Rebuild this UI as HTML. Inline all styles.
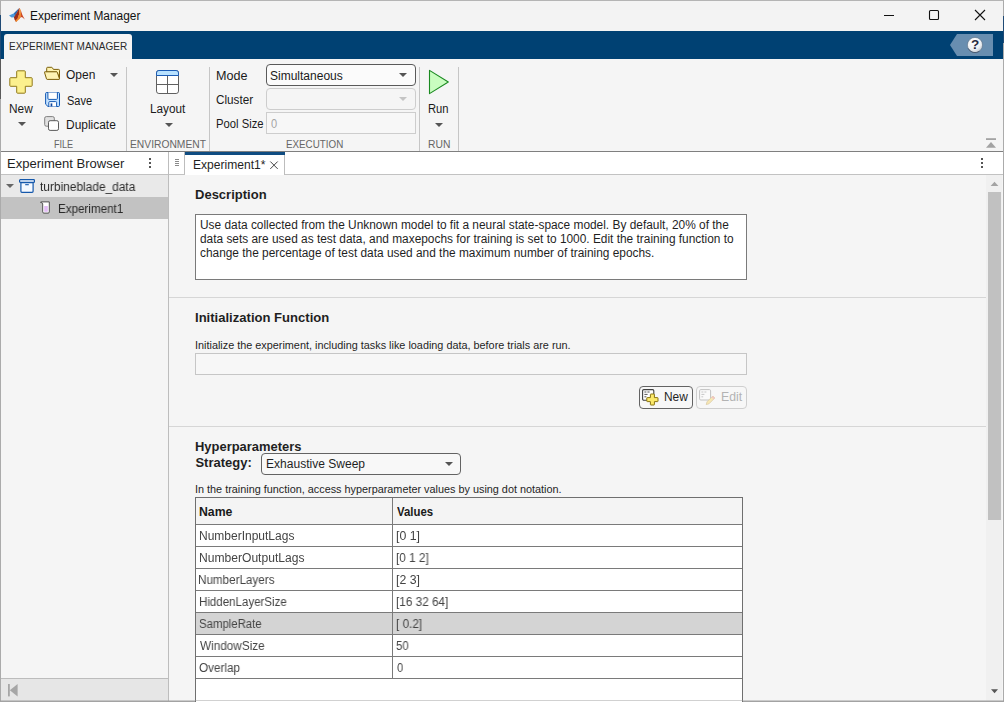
<!DOCTYPE html>
<html lang="en">
<head>
<meta charset="utf-8">
<title>Experiment Manager</title>
<style>
*{box-sizing:border-box;margin:0;padding:0}
html,body{width:1004px;height:702px;overflow:hidden;background:#f5f5f5}
body{position:relative;font-family:"Liberation Sans",sans-serif;font-size:12px;color:#1a1a1a}
.abs{position:absolute}
.t{position:absolute;white-space:nowrap;line-height:1;transform-origin:0 0}
/* window chrome */
#win{position:absolute;left:0;top:0;width:1004px;height:702px;background:#f5f5f5;border:1px solid #ababab;border-top-color:#b4b4b4}
#edgeL{position:absolute;left:0;top:59px;width:1px;height:40px;background:#5a5a5a}
#edgeL2{position:absolute;left:0;top:15px;width:1px;height:44px;background:#1f4a75}
#edgeR{position:absolute;left:1003px;top:16px;width:1px;height:27px;background:#1f4a75}
#edgeB{position:absolute;left:0;top:701px;width:1004px;height:1px;background:#a3a3a3}
#title{position:absolute;left:1px;top:1px;width:1002px;height:30px;background:#f3f3f3}
#band{position:absolute;left:1px;top:31px;width:1002px;height:28px;background:#004173}
#tab{position:absolute;left:4px;top:34px;width:128px;height:25px;background:#f4f4f4;border-radius:3px 3px 0 0}
#strip{position:absolute;left:1px;top:59px;width:1002px;height:92px;background:#f5f5f5}
#stripline{position:absolute;left:1px;top:151px;width:1002px;height:1px;background:#7f7f7f}
.vsep{position:absolute;top:67px;width:1px;height:84px;background:#c6c6c6}
.seg{font-size:12px;color:#1a1a1a}
.grp{font-size:10.5px;color:#666}
.c{color:#444;will-change:transform}
#ttb,#texp1{will-change:transform}
.dd{position:absolute;left:266px;width:150px;height:22px;border:1px solid #5a5a5a;border-radius:4px;background:#fbfbfb}
.arrow{position:absolute;width:0;height:0;border-left:4px solid transparent;border-right:4px solid transparent;border-top:4px solid #555}
/* panels */
#lefthead{position:absolute;left:1px;top:152px;width:167px;height:22px;background:#fff}
#dochead{position:absolute;left:169px;top:152px;width:834px;height:22px;background:#fff}
#headline{position:absolute;left:1px;top:174px;width:1002px;height:1px;background:#c2c2c2}
#leftv{position:absolute;left:168px;top:152px;width:1px;height:549px;background:#bdbdbd}
#row1{position:absolute;left:1px;top:175px;width:167px;height:22px;background:#e9e9e9}
#row2{position:absolute;left:1px;top:197px;width:167px;height:22px;background:#c2c2c2}
#leftfootline{position:absolute;left:1px;top:678px;width:167px;height:1px;background:#bcbcbc}
#leftfoot{position:absolute;left:1px;top:679px;width:167px;height:22px;background:#e6e6e6}
.hsep{position:absolute;left:169px;width:817px;height:1px;background:#d6d6d6}
.h{font-weight:bold;font-size:13px;color:#1f1f1f}
.a12{font-size:12px;color:#1f1f1f}
.a11{font-size:11px;color:#1f1f1f}
#desc{position:absolute;left:195px;top:214px;width:552px;height:66px;background:#fff;border:1px solid #7a7a7a;padding:4px 0 0 5px;font-size:12px;line-height:14px;color:#1f1f1f;white-space:nowrap}
#init{position:absolute;left:195px;top:353px;width:552px;height:22px;background:#f7f7f7;border:1px solid #c6c6c6}
.btn{position:absolute;top:386px;height:23px;border-radius:4px;background:#f7f7f7}
#tbl{position:absolute;left:195px;top:497px;width:548px;height:210px;background:#fff;border:1px solid #6f6f6f}
.tr{position:absolute;left:0;width:546px;height:1px;background:#7a7a7a}
#sbtrack{position:absolute;left:986px;top:175px;width:16px;height:526px;background:#f0f0f0}
#sbthumb{position:absolute;left:988px;top:192px;width:13px;height:328px;background:#c1c1c1}
</style>
</head>
<body>
<div id="win"></div>
<div id="edgeL"></div><div id="edgeL2"></div><div id="edgeR"></div><div id="edgeB"></div>
<div id="title"></div>
<div id="band"></div>
<div id="tab"></div>
<div id="strip"></div>
<div id="stripline"></div>

<!-- title bar -->
<svg class="abs" style="left:9px;top:8px" width="16" height="14" viewBox="0 0 16 14">
<path d="M0 7.4 L5 5.2 L8.6 1.8 L10 0.4 L7.8 4.8 L6.2 7.6 L5.4 9.2 L2.6 9.6 Z" fill="#4a98da"/>
<path d="M5 5.2 L8.6 1.8 L10.2 0.2 L7.8 4.8 L6.2 7.6 Z" fill="#2f68b0"/>
<path d="M4.9 9.3 L7.8 4.8 L10.3 0.1 L10.6 0 L10.2 6 L8.6 11.4 L7.1 14 L5.6 11.8 Z" fill="#9a2b1a"/>
<path d="M10.6 0 L11.7 2 L12.1 7.6 L10.8 10.8 L7.1 14 L6.2 12.6 L8.4 10.6 L10.1 6 Z" fill="#f0872c"/>
<path d="M11.7 2 L13.4 7 L15.8 11.4 L13.6 9.6 L12 8.9 L10.6 10.6 L12.1 7.6 Z" fill="#cd4722"/>
</svg>
<div class="t seg" id="ttl" style="left:29.9px;top:10px;font-size:12px;color:#111;transform:scaleX(0.991)">Experiment Manager</div>
<svg class="abs" style="left:880px;top:5px" width="110" height="20" viewBox="0 0 110 20">
<path d="M4 10.5 H14" stroke="#111" stroke-width="1" fill="none"/>
<rect x="49.5" y="5.5" width="9" height="9" rx="1" fill="none" stroke="#111" stroke-width="1.1"/>
<path d="M95 5 L105 15 M105 5 L95 15" stroke="#111" stroke-width="1.1" fill="none"/>
</svg>

<!-- band -->
<div class="t" id="tabtxt" style="left:9.4px;top:41px;font-size:10.5px;color:#2a2a2a;transform:scaleX(0.952)">EXPERIMENT MANAGER</div>
<svg class="abs" style="left:950px;top:34px" width="44" height="22" viewBox="0 0 44 22">
<defs><radialGradient id="hg" cx="0.4" cy="0.3" r="0.8"><stop offset="0" stop-color="#ffffff"/><stop offset="0.6" stop-color="#eef1f4"/><stop offset="1" stop-color="#b5bcc4"/></radialGradient></defs>
<path d="M0 11 L7 0 H43 V22 H7 Z" fill="#688eb0"/>
<circle cx="25" cy="11" r="7.6" fill="url(#hg)" stroke="#5b6f84" stroke-width="0.6"/>
<path d="M18.2 14.5 A7.6 7.6 0 0 0 29.5 17.2" fill="none" stroke="#3b4a63" stroke-width="1" opacity=".7"/><text x="25" y="15.2" text-anchor="middle" font-family="Liberation Sans, sans-serif" font-weight="bold" font-size="13.5" fill="#262b40">?</text>
</svg>

<!-- toolstrip: FILE -->
<svg class="abs" style="left:9px;top:70px" width="24" height="24" viewBox="0 0 24 24">
<path d="M8.5 0.8 H15.5 Q16.3 0.8 16.3 1.6 V7.7 H22.4 Q23.2 7.7 23.2 8.5 V15.5 Q23.2 16.3 22.4 16.3 H16.3 V22.4 Q16.3 23.2 15.5 23.2 H8.5 Q7.7 23.2 7.7 22.4 V16.3 H1.6 Q0.8 16.3 0.8 15.5 V8.5 Q0.8 7.7 1.6 7.7 H7.7 V1.6 Q7.7 0.8 8.5 0.8 Z" fill="#fcf08e" stroke="#91791a" stroke-width="1"/>
</svg>
<div class="t seg" id="tnew" style="left:9.2px;top:103px;transform:scaleX(0.988)">New</div>
<div class="arrow" style="left:18px;top:122px"></div>

<svg class="abs" style="left:44px;top:66px" width="17" height="15" viewBox="0 0 17 15">
<path d="M2.7 6 V2.2 Q2.7 1.3 3.6 1.3 H7.6 Q8.1 1.3 8.4 1.8 L9.4 3.4 H14.6 Q15.5 3.4 15.5 4.3 V12.6 L13 6 Z" fill="#fdf2b0" stroke="#7b5e08" stroke-width="1" stroke-linejoin="round"/>
<path d="M0.7 5.8 H12.6 Q13.1 5.8 13.3 6.3 L15.5 12.8 Q15.6 13.4 15 13.4 H3.2 Q2.7 13.4 2.5 12.9 L0.5 6.4 Q0.4 5.8 0.7 5.8 Z" fill="#fef3b4" stroke="#7b5e08" stroke-width="1" stroke-linejoin="round"/>
</svg>
<div class="t seg" id="topen" style="left:66.2px;top:69px;transform:scaleX(0.999)">Open</div>
<div class="arrow" style="left:110px;top:73px"></div>

<svg class="abs" style="left:45px;top:92px" width="16" height="16" viewBox="0 0 16 16">
<path d="M1.7 0.5 H13.4 Q14.5 0.5 14.5 1.6 V13.4 Q14.5 14.5 13.4 14.5 H3 L0.6 12.2 V1.6 Q0.6 0.5 1.7 0.5 Z" fill="#c2e1ff" stroke="#1459b3" stroke-width="1"/>
<path d="M2.9 0.5 V6.4 Q2.9 7.4 3.9 7.4 H11.4 Q12.4 7.4 12.4 6.4 V0.5" fill="#ffffff" stroke="#1459b3" stroke-width="1"/>
<path d="M3.8 14.5 V10.5 Q3.8 9.6 4.7 9.6 H10.7 Q11.6 9.6 11.6 10.5 V14.5" fill="#ffffff" stroke="#1459b3" stroke-width="1"/>
<rect x="5.6" y="11.4" width="1.7" height="3" fill="#0d47a1"/>
</svg>
<div class="t seg" id="tsave" style="left:66.6px;top:95px;transform:scaleX(0.918)">Save</div>

<svg class="abs" style="left:44px;top:116px" width="16" height="16" viewBox="0 0 16 16">
<rect x="0.7" y="0.6" width="9.6" height="9.6" rx="1.6" fill="#e1e1e1" stroke="#808080" stroke-width="1"/>
<rect x="4.5" y="4.7" width="10" height="9.7" rx="1.6" fill="#ffffff" stroke="#5a5a5a" stroke-width="1"/>
</svg>
<div class="t seg" id="tdup" style="left:66.4px;top:119px;transform:scaleX(0.996)">Duplicate</div>
<div class="t grp" id="gfile" style="left:54.3px;top:139px;transform:scaleX(0.865)">FILE</div>
<div class="vsep" style="left:126px"></div>

<!-- ENVIRONMENT -->
<svg class="abs" style="left:156px;top:70px" width="24" height="24" viewBox="0 0 24 24">
<rect x="0.5" y="0.5" width="22" height="23" rx="2.4" fill="#ffffff" stroke="#606060" stroke-width="1"/>
<path d="M0.5 14.5 H22.5 M11.5 5.8 V23.5" stroke="#606060" stroke-width="1"/>
<path d="M0.5 5.5 V2.9 Q0.5 0.5 2.9 0.5 H20.1 Q22.5 0.5 22.5 2.9 V5.5 Z" fill="#b7e1ff" stroke="#1b5cb5" stroke-width="1"/>
</svg>
<div class="t seg" id="tlayout" style="left:149.9px;top:103px;transform:scaleX(0.980)">Layout</div>
<div class="arrow" style="left:165px;top:123px"></div>
<div class="t grp" id="genv" style="left:129.9px;top:139px;transform:scaleX(0.979)">ENVIRONMENT</div>
<div class="vsep" style="left:209px"></div>

<!-- EXECUTION -->
<div class="t seg" id="tmode" style="left:215.8px;top:70px;transform:scaleX(1.048)">Mode</div>
<div class="t seg" id="tcluster" style="left:216.0px;top:94px;transform:scaleX(0.976)">Cluster</div>
<div class="t seg" id="tpool" style="left:215.8px;top:118px;transform:scaleX(0.937)">Pool Size</div>
<div class="dd" style="top:64px"></div>
<div class="t seg" id="tsim" style="left:269.8px;top:70px;transform:scaleX(1.001)">Simultaneous</div>
<div class="arrow" style="left:399px;top:73px"></div>
<div class="dd" style="top:88px;border-color:#cdcdcd;background:#f5f5f5"></div>
<div class="arrow" style="left:399px;top:97px;border-top-color:#c4c4c4"></div>
<div class="dd" style="top:112px;border-color:#cdcdcd;border-radius:0;background:#f7f7f7"></div>
<div class="t seg" id="tzero" style="left:270.8px;top:118px;color:#a5a5a5;transform:scaleX(0.92)">0</div>
<div class="t grp" id="gexec" style="left:285.7px;top:139px;transform:scaleX(0.934)">EXECUTION</div>
<div class="vsep" style="left:419px"></div>

<!-- RUN -->
<svg class="abs" style="left:428px;top:69px" width="22" height="26" viewBox="0 0 22 26">
<path d="M1.5 1.4 L20.3 13 L1.5 24.6 Z" fill="#c9fdc0" stroke="#1a8a20" stroke-width="1.1" stroke-linejoin="round"/>
</svg>
<div class="t seg" id="trun" style="left:427.5px;top:103px;transform:scaleX(0.935)">Run</div>
<div class="arrow" style="left:435px;top:123px"></div>
<div class="t grp" id="grun" style="left:427.8px;top:139px;transform:scaleX(0.982)">RUN</div>
<div class="vsep" style="left:458px"></div>

<svg class="abs" style="left:985px;top:137px" width="12" height="12" viewBox="0 0 12 12">
<rect x="1" y="1.2" width="10" height="1.8" fill="#a3a3a3"/>
<path d="M6 5 L11 10.8 H1 Z" fill="#a3a3a3"/>
</svg>

<!-- panel heads -->
<div id="lefthead"></div>
<div id="dochead"></div>
<div id="headline"></div>
<div class="t" id="tbrowser" style="left:6.7px;top:157px;font-size:13px;color:#1f1f1f;transform:scaleX(1.003)">Experiment Browser</div>
<svg class="abs" style="left:148px;top:157px" width="4" height="12" viewBox="0 0 4 12"><rect x="1" y="1" width="2" height="2" fill="#555"/><rect x="1" y="5" width="2" height="2" fill="#555"/><rect x="1" y="9" width="2" height="2" fill="#555"/></svg>
<div id="row1"></div>
<div id="row2"></div>
<div id="leftfootline"></div>
<div id="leftfoot"></div>
<div id="leftv"></div>

<!-- tree -->
<div class="arrow" style="left:6px;top:184px;border-top-color:#666"></div>
<svg class="abs" style="left:19px;top:179px" width="17" height="15" viewBox="0 0 17 15">
<path d="M1.9 3.6 V12.3 Q1.9 13.3 2.9 13.3 H13.1 Q14.1 13.3 14.1 12.3 V3.6 Z" fill="#f5f9ff" stroke="#1558ab" stroke-width="1.2"/>
<rect x="0.6" y="0.6" width="14.8" height="2.8" rx="0.7" fill="#f5f9ff" stroke="#1558ab" stroke-width="1.2"/>
<path d="M6.2 5.7 H9.8" stroke="#1558ab" stroke-width="1.1"/>
</svg>
<div class="t seg" id="ttb" style="left:40.2px;top:181px;color:#2a2a2a;transform:scaleX(0.992)">turbineblade_data</div>
<svg class="abs" style="left:40px;top:201px" width="11" height="13" viewBox="0 0 11 13">
<path d="M0.6 1.4 Q0.5 0.9 1.2 0.9 H9.3 V10.9 Q9.3 12.1 8.1 12.1 H3.9 Q2.7 12.1 2.7 10.9 V2.8 Q2.7 1.7 0.6 1.4 Z" fill="#ffffff" stroke="#444" stroke-width="0.9"/>
<rect x="4.2" y="5" width="3.6" height="5.8" fill="#e3bcf6"/>
</svg>
<div class="t seg" id="texp1" style="left:57.5px;top:203px;color:#2a2a2a;transform:scaleX(0.969)">Experiment1</div>
<svg class="abs" style="left:8px;top:684px" width="10" height="13" viewBox="0 0 10 13">
<rect x="0" y="0" width="1.8" height="12.4" fill="#a6a6a6"/>
<path d="M9.6 0 V12.4 L1.8 6.2 Z" fill="#a6a6a6"/>
</svg>

<!-- doc tabs -->
<div class="abs" style="left:184px;top:152px;width:1px;height:22px;background:#bdbdbd"></div>
<svg class="abs" style="left:174px;top:158px" width="6" height="9" viewBox="0 0 6 9"><path d="M1 1.5 H5 M1 3.5 H5 M1 5.5 H5 M1 7.5 H5" stroke="#8a8a8a" stroke-width="1"/></svg>
<div class="abs" style="left:185px;top:152px;width:100px;height:23px;background:#fff;border-right:1px solid #bdbdbd"></div>
<div class="abs" style="left:185px;top:152px;width:100px;height:3px;background:#0f4c81"></div>
<div class="t a12" id="tdoctab" style="left:192.8px;top:159px;transform:scaleX(1.006)">Experiment1*</div>
<svg class="abs" style="left:269px;top:160px" width="10" height="10" viewBox="0 0 10 10"><path d="M1.3 1.5 L8.7 8.9 M8.7 1.5 L1.3 8.9" stroke="#444" stroke-width="1" fill="none"/></svg>
<svg class="abs" style="left:980px;top:157px" width="4" height="12" viewBox="0 0 4 12"><rect x="1" y="1" width="2" height="2" fill="#555"/><rect x="1" y="5" width="2" height="2" fill="#555"/><rect x="1" y="9" width="2" height="2" fill="#555"/></svg>

<!-- content -->
<div class="t h" id="hdesc" style="left:194.9px;top:188px;transform:scaleX(1.001)">Description</div>
<div id="desc"></div>
<div class="t a12" id="d1" style="left:199.8px;top:219px;transform:scaleX(0.991)">Use data collected from the Unknown model to fit a neural state-space model. By default, 20% of the</div>
<div class="t a12" id="d2" style="left:200.2px;top:233px;transform:scaleX(0.990)">data sets are used as test data, and maxepochs for training is set to 1000. Edit the training function to</div>
<div class="t a12" id="d3" style="left:200.2px;top:247px;transform:scaleX(0.990)">change the percentage of test data used and the maximum number of training epochs.</div>
<div class="hsep" style="top:297px"></div>

<div class="t h" id="hinit" style="left:194.5px;top:311px;transform:scaleX(1.005)">Initialization Function</div>
<div class="t a11" id="pinit" style="left:194.9px;top:340px;transform:scaleX(0.986)">Initialize the experiment, including tasks like loading data, before trials are run.</div>
<div id="init"></div>
<div class="btn" style="left:639px;width:54px;border:1px solid #636363"></div>
<div class="btn" style="left:696px;width:51px;border:1px solid #cfcfcf"></div>
<svg class="abs" style="left:642px;top:389px" width="17" height="17" viewBox="0 0 17 17">
<rect x="0.6" y="0.6" width="11.2" height="10.6" rx="1.2" fill="#ffffff" stroke="#3f3f3f" stroke-width="1.1"/>
<path d="M2.4 3 H4.4 M5.4 3 H7.6 M2.4 5.4 H5.6 M2.4 7.8 H4.4" stroke="#555" stroke-width="1"/>
<path d="M8.9 5 H11.9 Q12.4 5 12.4 5.5 V8.6 H15.5 Q16 8.6 16 9.1 V12.1 Q16 12.6 15.5 12.6 H12.4 V15.5 Q12.4 16 11.9 16 H8.9 Q8.4 16 8.4 15.5 V12.6 H5.3 Q4.8 12.6 4.8 12.1 V9.1 Q4.8 8.6 5.3 8.6 H8.4 V5.5 Q8.4 5 8.9 5 Z" fill="#fbe96a" stroke="#8a7412" stroke-width="1"/>
</svg>
<svg class="abs" style="left:699px;top:389px" width="17" height="17" viewBox="0 0 17 17">
<rect x="0.6" y="0.6" width="11" height="10.4" rx="1.2" fill="#fafafa" stroke="#c2c2c2" stroke-width="1"/>
<path d="M2.4 3 H4.4 M5.4 3 H7.4 M2.4 5.4 H5.4 M2.4 7.8 H4.2" stroke="#c6c6c6" stroke-width="1"/>
<path d="M7.2 15.6 L8 12.8 L13.8 7 L15.8 9 L10 14.8 Z" fill="#f7e7b4" stroke="#d9c9a0" stroke-width="0.7"/>
<path d="M12.6 8.2 L13.8 7 L15.8 9 L14.6 10.2 Z" fill="#f3c4c4"/>
</svg>
<div class="t a12" id="bnew" style="left:663.5px;top:391px;transform:scaleX(0.993)">New</div>
<div class="t a12" id="bedit" style="left:721.2px;top:391px;color:#b3b3b3;transform:scaleX(1.021)">Edit</div>
<div class="hsep" style="top:426px"></div>

<div class="t h" id="hhyp" style="left:195.3px;top:440px;transform:scaleX(0.996)">Hyperparameters</div>
<div class="t h" id="hstrat" style="left:195.4px;top:456px;transform:scaleX(1.000)">Strategy:</div>
<div class="abs" style="left:261px;top:453px;width:200px;height:22px;border:1px solid #636363;border-radius:4px;background:#f8f8f8"></div>
<div class="t a12" id="tsweep" style="left:266.2px;top:458px;transform:scaleX(1.003)">Exhaustive Sweep</div>
<div class="arrow" style="left:445px;top:462px"></div>
<div class="t a11" id="phyp" style="left:194.9px;top:484px;transform:scaleX(0.986)">In the training function, access hyperparameter values by using dot notation.</div>

<div id="tbl">
<div class="abs" style="left:0;top:0;width:546px;height:26px;background:#f4f4f4"></div>
<div class="abs" style="left:0;top:115px;width:546px;height:22px;background:#d4d4d4"></div>
<div class="tr" style="top:26px"></div>
<div class="tr" style="top:48px"></div>
<div class="tr" style="top:70px"></div>
<div class="tr" style="top:92px"></div>
<div class="tr" style="top:114px"></div>
<div class="tr" style="top:136px"></div>
<div class="tr" style="top:158px"></div>
<div class="tr" style="top:180px"></div>
<div class="abs" style="left:196px;top:0;width:1px;height:181px;background:#7a7a7a"></div>
</div>
<div class="t seg" id="thname" style="left:199.3px;top:506px;font-weight:bold;transform:scaleX(1.022)">Name</div>
<div class="t seg" id="thval" style="left:396.5px;top:506px;font-weight:bold;transform:scaleX(0.948)">Values</div>
<div class="t seg c" id="r1a" style="left:199.2px;top:530px;transform:scaleX(0.997)">NumberInputLags</div>
<div class="t seg c" id="r1b" style="left:395.7px;top:530px;transform:scaleX(1.024)">[0 1]</div>
<div class="t seg c" id="r2a" style="left:199.2px;top:552px;transform:scaleX(1.007)">NumberOutputLags</div>
<div class="t seg c" id="r2b" style="left:395.8px;top:552px;transform:scaleX(0.984)">[0 1 2]</div>
<div class="t seg c" id="r3a" style="left:198.3px;top:574px;transform:scaleX(0.972)">NumberLayers</div>
<div class="t seg c" id="r3b" style="left:395.7px;top:574px;transform:scaleX(1.024)">[2 3]</div>
<div class="t seg c" id="r4a" style="left:198.8px;top:596px;transform:scaleX(0.960)">HiddenLayerSize</div>
<div class="t seg c" id="r4b" style="left:395.8px;top:596px;transform:scaleX(0.981)">[16 32 64]</div>
<div class="t seg c" id="r5a" style="left:198.5px;top:618px;transform:scaleX(0.949)">SampleRate</div>
<div class="t seg c" id="r5b" style="left:395.8px;top:618px;transform:scaleX(0.977)">[ 0.2]</div>
<div class="t seg c" id="r6a" style="left:199.6px;top:640px;transform:scaleX(0.980)">WindowSize</div>
<div class="t seg c" id="r6b" style="left:396.3px;top:640px;transform:scaleX(0.944)">50</div>
<div class="t seg c" id="r7a" style="left:199.1px;top:662px;transform:scaleX(0.977)">Overlap</div>
<div class="t seg c" id="r7b" style="left:396.6px;top:662px;transform:scaleX(0.92)">0</div>

<!-- scrollbar -->
<div id="sbtrack"></div>
<div id="sbthumb"></div>
<svg class="abs" style="left:990px;top:181px" width="9" height="6" viewBox="0 0 9 6"><path d="M4.5 0.8 L8.4 5 H0.6 Z" fill="#a3a3a3"/></svg>
<svg class="abs" style="left:990px;top:688px" width="9" height="6" viewBox="0 0 9 6"><path d="M4.5 5.2 L8 1.2 H1 Z" fill="#555"/></svg>

<!-- window bottom border -->
<div class="abs" style="left:0;top:700px;width:1004px;height:1px;background:#9a9a9a;opacity:.45"></div>
</body>
</html>
